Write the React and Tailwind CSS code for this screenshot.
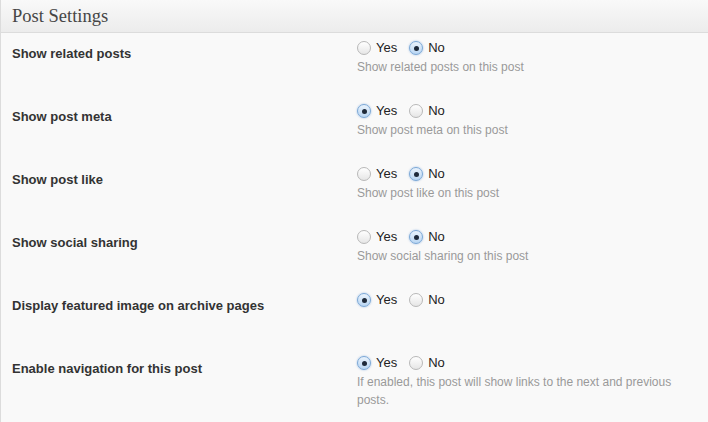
import React from 'react'

const rows = [
  { label: 'Show related posts', value: 'no', desc: 'Show related posts on this post' },
  { label: 'Show post meta', value: 'yes', desc: 'Show post meta on this post' },
  { label: 'Show post like', value: 'no', desc: 'Show post like on this post' },
  { label: 'Show social sharing', value: 'no', desc: 'Show social sharing on this post' },
  { label: 'Display featured image on archive pages', value: 'yes', desc: '' },
  {
    label: 'Enable navigation for this post',
    value: 'yes',
    desc: 'If enabled, this post will show links to the next and previous posts.',
  },
]

function Radio({ checked, children }) {
  return (
    <label className="flex items-center gap-[5px]">
      {checked ? (
        <span className="flex h-[14px] w-[14px] items-center justify-center rounded-full border border-[#7aa7d6] bg-gradient-to-b from-[#eaf3fc] to-[#b9d6f3] shadow-[0_0_2px_rgba(80,140,210,0.6)]">
          <span className="h-[5px] w-[5px] rounded-full bg-[#1e2a3a]" />
        </span>
      ) : (
        <span className="h-[14px] w-[14px] rounded-full border border-[#b8b8b8] bg-gradient-to-b from-[#ffffff] to-[#e6e6e6]" />
      )}
      <span className="text-[13px] leading-4 text-[#222]">{children}</span>
    </label>
  )
}

export default function App() {
  return (
    <div className="h-[422px] w-[708px] overflow-hidden border-l border-[#dcdcdc] bg-[#f9f9f9] font-['Liberation_Sans',Arial,sans-serif]">
      <div className="flex h-[33px] items-center border-b border-[#dcdcdc] bg-gradient-to-b from-[#f9f9f9] to-[#ececec] px-[11px]">
        <h3 className="font-['Liberation_Serif',Georgia,serif] text-[18.5px] leading-none text-[#464646]">
          Post Settings
        </h3>
      </div>
      {rows.map((row) => (
        <div key={row.label} className="flex h-[63px]">
          <div className="w-[345px] shrink-0 pl-[11px] pt-[12px] text-[13px] font-bold leading-[18px] text-[#333]">
            {row.label}
          </div>
          <div className="flex-1 pl-[11px] pt-[7px]">
            <div className="flex gap-[12px]">
              <Radio checked={row.value === 'yes'}>Yes</Radio>
              <Radio checked={row.value === 'no'}>No</Radio>
            </div>
            {row.desc && (
              <p className="mt-[2px] w-[340px] text-[12px] leading-[18px] text-[#999]">{row.desc}</p>
            )}
          </div>
        </div>
      ))}
    </div>
  )
}
